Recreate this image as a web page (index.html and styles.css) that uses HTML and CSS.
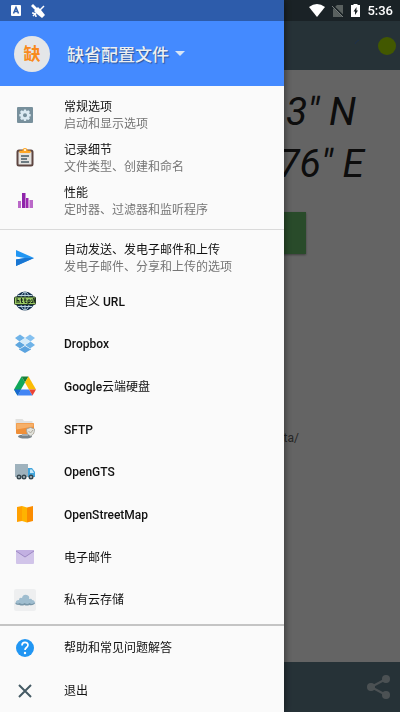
FILE: index.html
```html
<!DOCTYPE html>
<html lang="zh-CN">
<head>
    <meta charset="UTF-8">
    <meta name="viewport" content="width=device-width, initial-scale=1.0">
    <title>GPS Logger</title>
    <link rel="stylesheet" href="styles.css">
</head>
<body>
    <div class="screen">
        <header class="app-bar">
            <svg class="spinner" width="16" height="16" viewBox="0 0 16 16"><path d="M1 6a7 7 0 0 1 4-4" fill="none" stroke="#4a78b8" stroke-width="1"/></svg>
            <span class="status-dot"></span>
        </header>
        <main class="content">
            <div class="coords latitude">3" N</div>
            <div class="coords longitude">76" E</div>
            <button class="log-btn" aria-label="开始记录"></button>
            <div class="path">ta/</div>
        </main>
        <footer class="bottom-bar">
            <button class="share-btn" aria-label="分享">
                <svg width="26" height="26" viewBox="0 0 26 26" fill="#bccad0"><path d="M20 5L5 13l15 8" fill="none" stroke="#bccad0" stroke-width="2"/><circle cx="20" cy="5" r="4"/><circle cx="5" cy="13" r="4"/><circle cx="20" cy="21" r="4"/></svg>
            </button>
        </footer>
    </div>

    <div class="scrim"></div>

    <aside class="drawer">
        <div class="profile">
            <span class="avatar">缺</span>
            <button class="profile-btn">缺省配置文件 <span class="caret"></span></button>
        </div>
        <nav class="menu">
            <a href="#" class="row">
                <svg class="icon" viewBox="0 0 22 22"><rect x="3" y="3" width="16" height="16" rx="1" fill="#78909c"/><path d="M10 5.500h2l.5 1.700 1.900-.900 1.500 1.500-.900 1.900 1.700.5v2l-1.700.5.900 1.900-1.500 1.500-1.900-.900-.5 1.700h-2l-.5-1.700-1.900.900-1.500-1.500.900-1.900-1.700-.5v-2l1.700-.5-.900-1.900 1.500-1.500 1.900.900z" fill="#dceaf2"/><circle cx="11" cy="11.200" r="2" fill="#78909c"/></svg>
                <span class="text">常规选项<small>启动和显示选项</small></span>
            </a>
            <a href="#" class="row">
                <svg class="icon" viewBox="0 0 22 22"><rect x="3.500" y="3.500" width="15" height="15" rx="1.500" fill="#e4e2df" stroke="#5d4541" stroke-width="2"/><path d="M5.500 6V3.500H8.500a2.500 2.500 0 0 1 5 0H16.500V6z" fill="#ffa726"/><circle cx="11" cy="3" r="1" fill="#fff"/><path d="M7 9h8M7 12h6M7 15h8" stroke="#455a64" stroke-width="1.500"/></svg>
                <span class="text">记录细节<small>文件类型、创建和命名</small></span>
            </a>
            <a href="#" class="row">
                <svg class="icon" viewBox="0 0 22 22"><path d="M4 11h3v7H4z" fill="#ba68c8"/><path d="M8 3h3.500v15H8z" fill="#8e24aa"/><path d="M12 8h2.500v10H12z" fill="#9c27b0"/><path d="M15.500 10H19v8h-3.500z" fill="#ba68c8"/></svg>
                <span class="text">性能<small>定时器、过滤器和监听程序</small></span>
            </a>
            <hr class="divider">
            <a href="#" class="row">
                <svg class="icon" viewBox="0 0 22 22"><path d="M2 3l18 8-18 8v-6.500l9-1.500-9-1.500z" fill="#2196f3"/><path d="M2 19l18-8h-9l-9 1.500z" fill="#1976d2"/></svg>
                <span class="text">自动发送、发电子邮件和上传<small>发电子邮件、分享和上传的选项</small></span>
            </a>
            <a href="#" class="row">
                <svg class="icon" viewBox="0 0 22 22"><circle cx="11" cy="11" r="9.500" fill="#15304f"/><g fill="none" stroke="#b8d2de"><ellipse cx="11" cy="11" rx="4.500" ry="9"/><path d="M11 2v18M4 5.500h14M4 16.500h14"/></g><rect x=".500" y="7" width="21" height="7.500" rx="1" fill="#9ccc65" stroke="#263b24"/><path d="M3 8v5M3 10.500h2V13M7.500 8v4.500H9M6.500 10h2.500M11 8v4.500h1.500M10 10h2.500M14 14v-4h2v2.500h-2M17.500 9.500v1M17.500 12v1M18.500 13l1-5M20 13l1-5" fill="none" stroke="#17251b"/></svg>
                <span class="text">自定义 <b>URL</b></span>
            </a>
            <a href="#" class="row">
                <svg class="icon" viewBox="0 0 22 22"><path d="M6 1.500l5 3.500-5.500 3.500L1 5z" fill="#6fb3e8"/><path d="M16 1.500L21 5l-4.500 3.500L11 5z" fill="#85c1f0"/><path d="M5.500 8.500L11 12l-5 3.500-5-3.500z" fill="#5ea6de"/><path d="M16.500 8.500L21 12l-5 3.500-5-3.500z" fill="#6fb3e8"/><path d="M5.500 8.500L11 5l5.500 3.500L11 12z" fill="#d4ebfa"/><path d="M5 15.500l1 .500L11 13l5 3 1-.500v1L11 20l-6-3.500z" fill="#5ba3df"/></svg>
                <span class="text"><b>Dropbox</b></span>
            </a>
            <a href="#" class="row">
                <svg class="icon" viewBox="0 0 22 22"><path d="M7.500 1.500L0 14.500l3.500 6L11 7.500z" fill="#11a85a"/><path d="M7.500 1.500h7L11 7.500z" fill="#188038"/><path d="M14.500 1.500L22 14.500h-7L11 7.500z" fill="#fbbc04"/><path d="M3.500 20.500L7 14.500h8l3.500 6z" fill="#4285f4"/><path d="M0 14.500h7l-3.500 6z" fill="#1967d2"/><path d="M15 14.500h7l-3.500 6z" fill="#ea4335"/></svg>
                <span class="text"><b>Google</b>云端硬盘</span>
            </a>
            <a href="#" class="row">
                <svg class="icon" viewBox="0 0 22 22"><path d="M1.500 1h7l1.500 2h8.500v8h-17z" fill="#e1e1df"/><rect x="2" y="5" width="18" height="11" rx="1" fill="#ef8f38"/><path d="M2.500 5.500h17v3l-17 3z" fill="#f6b069"/><ellipse cx="11" cy="18.500" rx="7" ry="2" fill="#78838a"/><path d="M8 16h6v2H8z" fill="#a5acb0"/><path d="M16.500 9.500l4 1.500c0 4-1 5.500-4 7-3-1.500-4-3-4-7z" fill="#e2e3dc" stroke="#9c9d99" stroke-width=".800"/><path d="M14.500 13l2 2 2.500-3" fill="none" stroke="#ada99e"/></svg>
                <span class="text"><b>SFTP</b></span>
            </a>
            <a href="#" class="row">
                <svg class="icon" viewBox="0 0 22 22"><path d="M1 3h13v13H1z" fill="#9fb2bd"/><path d="M14 7h4l3 4v5h-7z" fill="#42a5dc"/><path d="M16 8.500h2l2 3.500h-4z" fill="#c6e8f8"/><g fill="#37474f"><circle cx="5" cy="16" r="2.500"/><circle cx="10" cy="16" r="2.500"/><circle cx="17" cy="16" r="2.500"/></g><g fill="#b0bec5"><circle cx="5" cy="16" r="1"/><circle cx="10" cy="16" r="1"/><circle cx="17" cy="16" r="1"/></g></svg>
                <span class="text"><b>OpenGTS</b></span>
            </a>
            <a href="#" class="row">
                <svg class="icon" viewBox="0 0 22 22"><path d="M3 4l5-1v15l-5 1z" fill="#ffa000"/><path d="M8 3l5 1.500v15L8 18z" fill="#ffb300"/><path d="M13 4.500L19 3v15l-6 1.500z" fill="#fb8c00"/></svg>
                <span class="text"><b>OpenStreetMap</b></span>
            </a>
            <a href="#" class="row">
                <svg class="icon" viewBox="0 0 22 22"><rect x="2" y="4" width="18" height="14" rx="1" fill="#d1c4e9"/><path d="M2 5q0-1 1-1h16q1 0 1 1l-9 6z" fill="#c2b0e2"/><path d="M2 5l9 6 9-6" fill="none" stroke="#9e88c4"/></svg>
                <span class="text">电子邮件</span>
            </a>
            <a href="#" class="row">
                <svg class="icon" viewBox="0 0 22 22"><rect width="22" height="22" rx="2" fill="#eeeff0"/><path d="M2 15q-1-4 3-4 0-3 3-2 1-4 5-3 3 1 2 4 3-1 3 1 3 0 3 4z" fill="#9fbdcf"/><path d="M1.500 13.500q2 2 4 .500 3 2 5 0 3 2 5 0 3 2 5-.500V15q-3 2-5 1-3 1-5 0-3 1-5 0-3 0-4-1z" fill="#7896a8"/></svg>
                <span class="text">私有云存储</span>
            </a>
        </nav>
        <div class="menu-footer">
            <a href="#" class="row">
                <svg class="icon" viewBox="0 0 22 22"><circle cx="11" cy="11" r="9" fill="#2196f3"/><path d="M8 8.500c0-4 6-4 6-.500 0 2.500-3 2.500-3 5" fill="none" stroke="#fff" stroke-width="1.700"/><circle cx="11" cy="16" r="1.200" fill="#fff"/></svg>
                <span class="text">帮助和常见问题解答</span>
            </a>
            <a href="#" class="row">
                <svg class="icon" viewBox="0 0 22 22"><path d="M5 5l12 12M17 5L5 17" stroke="#455a64" stroke-width="2"/></svg>
                <span class="text">退出</span>
            </a>
        </div>
    </aside>

    <div class="status-bar">
        <svg width="10" height="11" viewBox="0 0 10 11"><rect width="10" height="11" rx="1" fill="#fff"/><path d="M2.500 8.500L5 2.500l2.500 6M3.500 6.500h3" fill="none" stroke="#2d5ca9" stroke-width="1.500"/></svg>
        <svg class="satellite" width="14" height="14" viewBox="0 0 14 14" fill="#fff"><path d="M0 2l2-2 4 4 1-1 3 3 4 5-3 3-5-4-3-3 1-1z"/><path d="M9 6l4-4M1 9q4 0 4 4M2 12l3-3" fill="none" stroke="#fff" stroke-width="1.500"/></svg>
        <span class="spacer"></span>
        <svg width="16" height="13" viewBox="0 0 16 13"><path d="M0 3q8-6 16 0L8 13z" fill="#fff"/></svg>
        <svg width="12" height="14" viewBox="0 0 12 14"><path d="M5 1h6v12H1V5z" fill="#59605f"/><path d="M0 1l12 12" stroke="#192125" stroke-width="2"/><path d="M0 2l11 11" stroke="#777d7d"/></svg>
        <svg width="9" height="13" viewBox="0 0 9 13"><path d="M0 1h2.500V0h4v1H9v12H0z" fill="#fff"/><path d="M5.500 3L2.500 7.500h1.500V11l3-4.500H5.500z" fill="#192125"/></svg>
        <span class="clock">5:36</span>
    </div>
</body>
</html>
```
FILE: styles.css
```css
* {
    box-sizing: border-box;
}
body {
    margin: 0;
    font-family: Roboto, "Noto Sans CJK SC", sans-serif;
    font-size: 12px;
    color: #212121;
    background: #fafafa;
}
button {
    border: none;
    padding: 0;
    background: none;
    font: inherit;
    color: inherit;
    cursor: pointer;
}
.screen {
    display: flex;
    flex-direction: column;
    min-height: 100vh;
}
.app-bar {
    display: flex;
    justify-content: flex-end;
    align-items: center;
    gap: 8px;
    height: 70px;
    padding: 21px 4px 0 0;
    background: #607d8b;
}
.status-dot {
    width: 18px;
    height: 18px;
    border-radius: 50%;
    background: #a5dc00;
}
.content {
    flex: 1;
    display: flex;
    flex-direction: column;
    padding-top: 16px;
}
.coords {
    font-size: 39px;
    font-style: italic;
    line-height: 52px;
    text-align: right;
}
.latitude {
    padding-right: 44px;
}
.longitude {
    padding-right: 36px;
}
.log-btn {
    align-self: center;
    width: 53%;
    height: 42px;
    margin-top: 22px;
    background: #66bb6a;
    box-shadow: 0 1px 2px rgba(0, 0, 0, 0.4);
}
.path {
    margin-top: 176px;
    padding-right: 101px;
    line-height: 17px;
    text-align: right;
    color: #616161;
}
.bottom-bar {
    display: flex;
    justify-content: flex-end;
    align-items: center;
    height: 50px;
    padding-right: 8px;
    background: #607d8b;
}
.share-btn svg {
    display: block;
}
.scrim {
    position: fixed;
    inset: 0;
    background: rgba(0, 0, 0, 0.6);
}

/* navigation drawer */
.drawer {
    position: fixed;
    top: 0;
    left: 0;
    bottom: 0;
    width: 71%;
    display: flex;
    flex-direction: column;
    overflow-y: auto;
    background: #fafafa;
    box-shadow: 0 0 8px rgba(0, 0, 0, 0.6);
}
.profile {
    display: flex;
    align-items: center;
    gap: 17px;
    height: 86px;
    padding: 21px 14px 0;
    background: #448aff;
}
.avatar {
    width: 36px;
    height: 36px;
    border-radius: 50%;
    background: #e4e6e8;
    color: #f98a1c;
    font-size: 17px;
    font-weight: bold;
    line-height: 36px;
    text-align: center;
}
.profile-btn {
    display: flex;
    align-items: center;
    gap: 6px;
    color: #eceff1;
    font-size: 17px;
    font-weight: 500;
    text-shadow: 1px 1px 1px rgba(0, 0, 0, 0.4);
}
.caret {
    border: 5px solid transparent;
    border-top-color: #d8e5f5;
    border-bottom: none;
}
.menu {
    flex: 1;
    display: flex;
    flex-direction: column;
    padding: 8px 0 3px;
}
.row {
    flex: 1;
    display: flex;
    align-items: center;
    gap: 28px;
    min-height: 40px;
    padding: 0 14px;
    color: #111;
    text-decoration: none;
}
.icon {
    flex: none;
    width: 22px;
    height: 22px;
}
.text {
    padding-top: 2px;
    line-height: 17px;
    white-space: nowrap;
}
.text b {
    font-weight: 500;
}
.text small {
    display: block;
    font-size: 12px;
    color: #757575;
}
.divider {
    width: 100%;
    margin: 7px 0;
    border: none;
    border-top: 1px solid #dadada;
}
.menu-footer {
    display: flex;
    flex-direction: column;
    height: 88px;
    border-top: 2px solid #c4c4c4;
}

/* drawn over the drawer and the page */
.status-bar {
    position: fixed;
    top: 0;
    left: 0;
    right: 0;
    display: flex;
    align-items: center;
    gap: 7px;
    height: 21px;
    padding: 0 7px 0 11px;
    background: rgba(0, 0, 0, 0.33);
    color: #fff;
}
.satellite {
    margin-left: 3px;
}
.spacer {
    flex: 1;
}
.clock {
    font-size: 13px;
    font-weight: 500;
}
```
